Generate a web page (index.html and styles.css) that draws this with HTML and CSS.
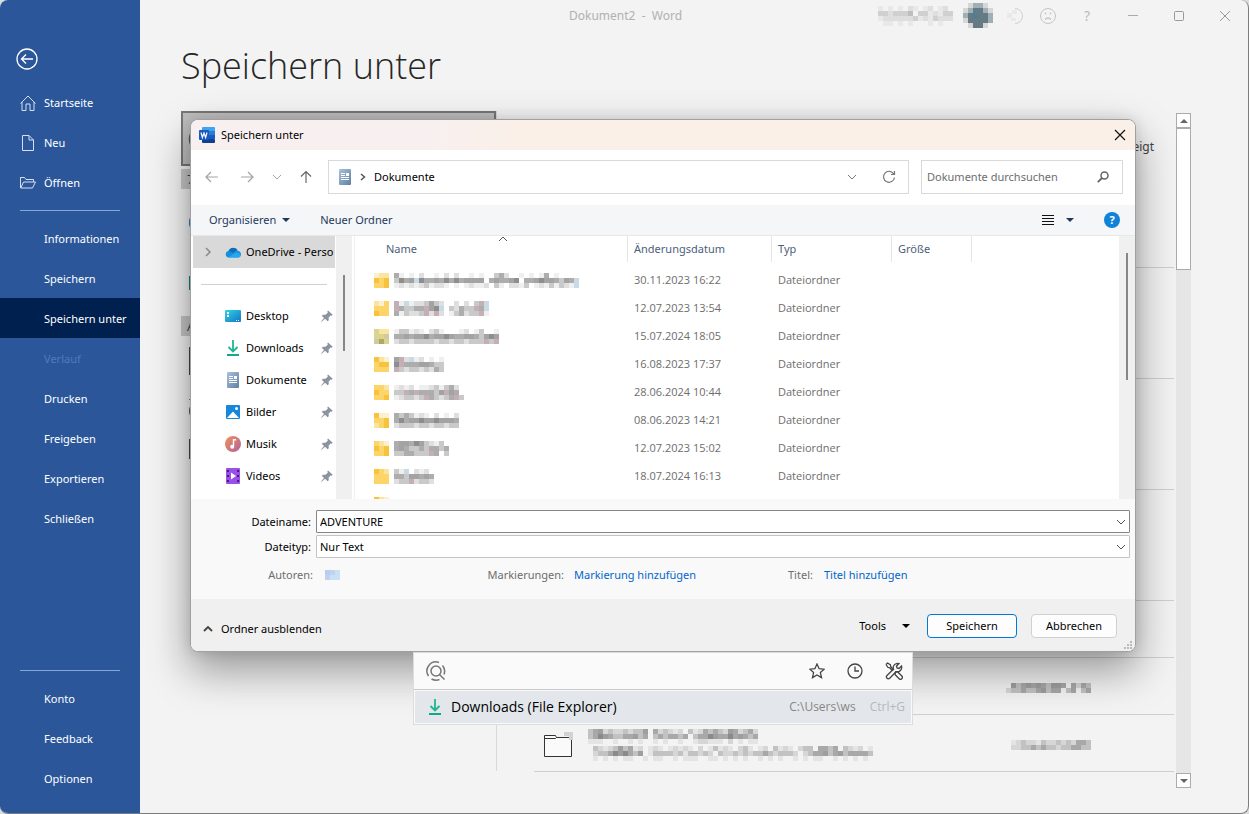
FILE: index.html
```html
<!DOCTYPE html>
<html lang="de">
<head>
<meta charset="utf-8">
<title>Dokument2 - Word</title>
<link rel="stylesheet" href="styles.css">
</head>
<body>
<svg class="defs" aria-hidden="true">
  <defs>
    <linearGradient id="g-dl" x1="0" y1="0" x2="0" y2="1"><stop offset="0" stop-color="#2cc59b"/><stop offset="1" stop-color="#0f9f86"/></linearGradient>
    <linearGradient id="g-doc" x1="0" y1="0" x2="1" y2="1"><stop offset="0" stop-color="#a9c2dc"/><stop offset="1" stop-color="#5f7fa3"/></linearGradient>
    <linearGradient id="g-desk" x1="0" y1="0" x2="1" y2="1"><stop offset="0" stop-color="#33d3e0"/><stop offset="1" stop-color="#1275c8"/></linearGradient>
    <linearGradient id="g-music" x1="0" y1="0" x2="1" y2="1"><stop offset="0" stop-color="#f2925a"/><stop offset="1" stop-color="#b0609c"/></linearGradient>
  </defs>
  <symbol id="i-doc" viewBox="0 0 14 16"><rect x="1" y="0" width="12" height="16" rx="1" fill="url(#g-doc)"/><path d="M3 4.500h4M3 6.500h4M3 8.500h8M3 10.500h8" stroke="#fff"/><rect x="8" y="4" width="3" height="3" fill="#fff"/></symbol>
  <symbol id="i-dl" viewBox="0 0 16 16"><path d="M8 0v11M3.500 7L8 11.500 12.500 7" fill="none" stroke="#1fb592" stroke-width="1.800"/><path d="M2 15h12" stroke="#14a88a" stroke-width="2"/></symbol>
  <symbol id="i-pin" viewBox="0 0 12 12"><path d="M7 .5l4.700 4.300-1 1-1.200-.2L7.600 7.800l.2 2.400-1.200 1L4 8.800.7 11.700l-.5-.5L3 8 .8 5.700 2 4.700l2.500.1L6.800 2.800l-.5-1.300z" fill="#8a949e"/></symbol>
  <symbol id="i-down" viewBox="0 0 10 6"><path d="M1 1l4 4 4-4" fill="none" stroke="currentColor"/></symbol>
  <symbol id="i-tri" viewBox="0 0 8 4"><path d="M0 0h8L4 4z" fill="currentColor"/></symbol>
</svg>
<div class="window">
  <nav class="side">
    <button class="back" aria-label="Zurück"><svg width="22" height="22" viewBox="0 0 22 22"><circle cx="11" cy="11" r="10" fill="none" stroke="#fff" stroke-width="1.300"/><path d="M17 11H6M10 6.500L5.500 11l4.500 4.500" fill="none" stroke="#fff" stroke-width="1.300"/></svg></button>
    <a class="item" href="#"><svg width="16" height="16" viewBox="0 0 16 16"><path d="M.5 8.500L8 1l7.500 7.500M2 7v8.500h4V9h4v6.500h4V7" fill="none" stroke="#d5e0f2"/></svg>Startseite</a>
    <a class="item" href="#"><svg width="16" height="16" viewBox="0 0 16 16"><path d="M2.500.5H9L13.500 5v10.500h-11zM9 .5V5h4.500" fill="none" stroke="#d5e0f2"/></svg>Neu</a>
    <a class="item" href="#"><svg width="16" height="16" viewBox="0 0 16 16"><path d="M.5 13V2.500h4L6 4.500h7.500V7M.8 13L3.500 7h12L12.500 13z" fill="none" stroke="#d5e0f2"/></svg>Öffnen</a>
    <hr>
    <a class="item" href="#">Informationen</a>
    <a class="item" href="#">Speichern</a>
    <a class="item current" href="#">Speichern unter</a>
    <a class="item off" aria-disabled="true" href="#">Verlauf</a>
    <a class="item" href="#">Drucken</a>
    <a class="item" href="#">Freigeben</a>
    <a class="item" href="#">Exportieren</a>
    <a class="item" href="#">Schließen</a>
    <div class="grow"></div>
    <hr>
    <a class="item" href="#">Konto</a>
    <a class="item" href="#">Feedback</a>
    <a class="item" href="#">Optionen</a>
  </nav>

  <main class="main">
    <header class="caption">
      <span class="caption-title">Dokument2&nbsp; -&nbsp; Word</span>
      <svg class="mosaic user" data-rows=".1.1.1.21.12.12.|.3323334.3312133|.122222231213222|..11.1.1...1.1.."></svg>
      <svg class="mosaic avatar" data-rows=".2tt2|2tTTt2|tTBTTt|2TTTTt|.2TT2"></svg>
      <button class="cap small" aria-label="Status"><svg width="18" height="18" viewBox="0 0 18 18"><path d="M8 1.500a7.500 7.500 0 0 1 0 15" fill="none" stroke="#cfcfcf"/><path d="M0 6h5v5H0zM5 3h5v4H5zM4 11h5v3H4z" fill="#e9e9e9"/></svg></button>
      <button class="cap small" aria-label="Feedback geben"><svg width="18" height="18" viewBox="0 0 18 18"><circle cx="9" cy="9" r="7.500" fill="none" stroke="#c4c4c4"/><path d="M6 12.500q3-3 6 0M6.500 5.500v2M11.500 5.500v2" fill="none" stroke="#c4c4c4" stroke-width="1.300"/></svg></button>
      <button class="cap quest">?</button>
      <button class="cap" aria-label="Minimieren"><svg width="12" height="12"><path d="M1 5.500h10" stroke="#aaa"/></svg></button>
      <button class="cap" aria-label="Maximieren"><svg width="12" height="12"><rect x="1.500" y="1.500" width="9" height="9" rx="1" fill="none" stroke="#999"/></svg></button>
      <button class="cap" aria-label="Schließen"><svg width="12" height="12"><path d="M1 1l10 10M11 1L1 11" stroke="#999"/></svg></button>
    </header>
    <h1>Speichern unter</h1>
    <div class="content">
      <section class="places">
        <button class="recent" aria-label="Zuletzt verwendet"><svg width="28" height="28" viewBox="0 0 28 28"><circle cx="14" cy="14" r="12.500" fill="none" stroke="#555" stroke-width="1.500"/></svg></button>
        <h2>7</h2>
        <div class="place"><svg width="30" height="16"><rect y="3" width="20" height="11" rx="4" fill="#1583d0"/></svg></div>
        <div class="place"><svg width="30" height="14"><rect width="30" height="14" fill="#0f7f86"/></svg></div>
        <h2 class="second">A</h2>
        <div class="place"><svg width="30" height="28"><rect x=".5" y=".5" width="28" height="27" fill="none" stroke="#444"/></svg></div>
        <div class="place"><svg width="30" height="24"><path d="M0 4.500h20" stroke="#3f9a50"/><rect x=".5" y="9" width="20" height="14" rx="6" fill="none" stroke="#555"/></svg></div>
        <div class="place"><svg width="30" height="20"><rect x=".5" y=".5" width="28" height="19" fill="none" stroke="#444"/></svg></div>
      </section>
      <section class="files">
        <p class="hint">zeigt</p>
        <ul>
          <li class="tall"></li><li class="tall"></li><li class="tall"></li><li class="tall"></li>
          <li></li>
          <li><svg class="mosaic date" data-rows=".53454543554.4243|23343345344.34.34"></svg></li>
          <li>
            <svg class="folder" width="30" height="26" viewBox="0 0 30 26"><path d="M1.500 24.500v-21h11l1 2h15v19zM1.500 6.500h11l1-1" fill="#fafafa" stroke="#333"/><path d="M21 0h9v8h-4V4h-5z" fill="#d2d2d2"/></svg>
            <div class="lines">
              <svg class="mosaic" data-rows="345232232335.423212.31243432542342|346543344534.3434434.3446544645434|111..1..1.1..1.1..1..122111.2.1.11"></svg>
              <svg class="mosaic" data-rows=".3212353412.121.12121.2.13121.231.12.3121.233.4434.3212.1|.2334656435.1333323133232.3223232334323332.23445345344443|.1.1.1.11..1.11..1.111..11.1.1.1..1.1.1..1.1.11..1.1.1.1."></svg>
            </div>
            <svg class="mosaic date" data-rows=".1232213223232443|.2233434332334433"></svg>
          </li>
        </ul>
      </section>
      <div class="scroll">
        <button aria-label="Nach oben"><svg width="8" height="4" class="up"><use href="#i-tri"/></svg></button>
        <div class="thumb"></div>
        <div class="grow"></div>
        <button aria-label="Nach unten"><svg width="8" height="4"><use href="#i-tri"/></svg></button>
      </div>
    </div>
  </main>

  <section class="dialog" role="dialog" aria-labelledby="dlg-title">
    <header class="dlg-head">
      <svg width="16" height="16" viewBox="0 0 16 16"><rect x="3" y="0" width="13" height="5" rx="1" fill="#41a5ee"/><rect x="3" y="4" width="13" height="4" fill="#2b7cd3"/><rect x="3" y="8" width="13" height="4" fill="#185abd"/><rect x="3" y="12" width="13" height="4" rx="1" fill="#103f91"/><rect x="0" y="3" width="10" height="10" rx="1" fill="#185abd"/><path d="M2 5.500l1.400 5L5 6l1.600 4.500L8 5.500" fill="none" stroke="#fff" stroke-width="1.200"/></svg>
      <span id="dlg-title">Speichern unter</span>
      <button class="plain close" aria-label="Schließen"><svg width="12" height="12"><path d="M1 1l10 10M11 1L1 11" stroke="#111" stroke-width="1.200"/></svg></button>
    </header>
    <div class="navbar">
      <button class="plain" aria-label="Zurück"><svg width="14" height="14"><path d="M13 7H1.500M6 2L1 7l5 5" fill="none" stroke="#a3a3a3" stroke-width="1.200"/></svg></button>
      <button class="plain" aria-label="Vorwärts"><svg width="14" height="14"><path d="M1 7h11.500M8 2l5 5-5 5" fill="none" stroke="#a3a3a3" stroke-width="1.200"/></svg></button>
      <button class="plain chev" aria-label="Verlauf"><svg width="10" height="6"><use href="#i-down"/></svg></button>
      <button class="plain" aria-label="Übergeordneter Ordner"><svg width="14" height="14"><path d="M7 13V1.500M2 6.500l5-5 5 5" fill="none" stroke="#666" stroke-width="1.200"/></svg></button>
      <div class="address">
        <svg width="14" height="16"><use href="#i-doc"/></svg>
        <svg width="6" height="8" viewBox="0 0 6 8"><path d="M1 1l3.500 3L1 7" fill="none" stroke="#555" stroke-width="1.500"/></svg>
        <span>Dokumente</span>
        <button class="plain grey" aria-label="Adressen anzeigen"><svg width="10" height="6"><use href="#i-down"/></svg></button>
        <button class="plain" aria-label="Aktualisieren"><svg width="14" height="14" viewBox="0 0 14 14"><path d="M11.800 4A5.500 5.500 0 1 0 12.500 7.500M12.500 1v3.500H9" fill="none" stroke="#777" stroke-width="1.200"/></svg></button>
      </div>
      <label class="search">
        <input type="text" placeholder="Dokumente durchsuchen" aria-label="Dokumente durchsuchen">
        <svg width="12" height="12" viewBox="0 0 12 12"><circle cx="7.500" cy="4.500" r="3.500" fill="none" stroke="#666" stroke-width="1.500"/><path d="M5 7L.8 11.200" stroke="#666" stroke-width="1.800"/></svg>
      </label>
    </div>
    <div class="toolbar">
      <button class="plain">Organisieren<svg width="8" height="4"><use href="#i-tri"/></svg></button>
      <button class="plain">Neuer Ordner</button>
      <div class="grow"></div>
      <button class="plain view" aria-label="Ansicht"><svg width="12" height="11"><path d="M0 .5h12M0 3.500h12M0 6.500h12M0 9.500h12" stroke="#111"/></svg><svg width="8" height="4"><use href="#i-tri"/></svg></button>
      <button class="help" aria-label="Hilfe">?</button>
    </div>
    <div class="browser">
      <div class="tree">
        <a href="#" class="node root"><svg width="6" height="10" viewBox="0 0 6 10"><path d="M1 1l4 4-4 4" fill="none" stroke="#888" stroke-width="1.500"/></svg><svg width="16" height="12" viewBox="0 0 16 12"><path d="M4 9.500A4 4 0 0 1 4 4a5 5 0 0 1 8.500 0L8 9z" fill="#0f6cbd"/><path d="M3.500 11.500a3.300 3.300 0 0 1 0-6.500c2 0 3 1 4.500 2l3-2.500c3 0 5 1.500 5 3.800 0 2-1.500 3.200-3 3.200z" fill="#1490df"/><path d="M3 11.500l8-5c2 .3 5 1.500 4.500 3.500-.5 1-1.500 1.500-2.500 1.500z" fill="#28a8ea"/></svg><span>OneDrive - Perso</span></a>
        <hr>
        <a href="#" class="node"><svg width="16" height="16" viewBox="0 0 16 16"><rect y="2" width="16" height="12" rx="1" fill="url(#g-desk)"/><path d="M2 4h2v2H2zM2 7h2v2H2z" fill="#fff"/><path d="M11 12.500h4" stroke="#fff" stroke-dasharray="1 1"/></svg><span>Desktop</span><svg width="12" height="12"><use href="#i-pin"/></svg></a>
        <a href="#" class="node"><svg width="16" height="16"><use href="#i-dl"/></svg><span>Downloads</span><svg width="12" height="12"><use href="#i-pin"/></svg></a>
        <a href="#" class="node"><svg width="16" height="16"><use href="#i-doc"/></svg><span>Dokumente</span><svg width="12" height="12"><use href="#i-pin"/></svg></a>
        <a href="#" class="node"><svg width="16" height="16" viewBox="0 0 16 16"><rect x="1" y="1" width="14" height="14" rx="1" fill="#1787db"/><path d="M2 14l6-6.500 6 6.500z" fill="#fff"/><circle cx="11.500" cy="4.500" r="1.500" fill="#fff"/></svg><span>Bilder</span><svg width="12" height="12"><use href="#i-pin"/></svg></a>
        <a href="#" class="node"><svg width="16" height="16" viewBox="0 0 16 16"><circle cx="8" cy="8" r="8" fill="url(#g-music)"/><path d="M8.500 10.500V3.800h2.700" fill="none" stroke="#fff" stroke-width="1.400"/><circle cx="7.200" cy="10.800" r="2" fill="#fff"/></svg><span>Musik</span><svg width="12" height="12"><use href="#i-pin"/></svg></a>
        <a href="#" class="node"><svg width="16" height="16" viewBox="0 0 16 16"><rect x="1" width="14" height="16" rx="1" fill="#9a4fe8"/><path d="M6 4.500v7L11 8z" fill="#fff"/><path d="M3 2v12M13 2v12" stroke="#4a1a80" stroke-width="2" stroke-dasharray="2 3"/></svg><span>Videos</span><svg width="12" height="12"><use href="#i-pin"/></svg></a>
      </div>
      <div class="track left"><div></div></div>
      <div class="list">
        <svg class="sort" width="10" height="6"><use href="#i-down"/></svg>
        <table>
          <thead><tr><th class="c-name"><div>Name</div></th><th class="c-date"><div>Änderungsdatum</div></th><th class="c-type"><div>Typ</div></th><th class="c-size"><div>Größe</div></th><th class="c-rest"></th></tr></thead>
          <tbody>
            <tr><td><span class="cell"><svg class="mosaic" data-rows="loo|YyY|yyY"></svg><svg class="mosaic" data-rows="41.1.2..1.2.2..1.1..342..1.1.14.1....|3645b6445464645555.454456.4456554354b|12121231221.1.12112.31.2213.12131321b"></svg></span></td><td>30.11.2023 16:22</td><td>Dateiordner</td><td></td></tr>
            <tr><td><span class="cell"><svg class="mosaic" data-rows="oly|yyy|Yyy"></svg><svg class="mosaic" data-rows="p1b1223532..2.2.3pb|p43344p56b.32433p4b|413223p2p2.134233p1"></svg></span></td><td>12.07.2023 13:54</td><td>Dateiordner</td><td></td></tr>
            <tr><td><span class="cell"><svg class="mosaic" data-rows="goo|ggO|OGg"></svg><svg class="mosaic" data-rows="133121.231...12.13..1|445455645565445543565|233233332332332333p3p"></svg></span></td><td>15.07.2024 18:05</td><td>Dateiordner</td><td></td></tr>
            <tr><td><span class="cell"><svg class="mosaic" data-rows="Yol|yYY|yyy"></svg><svg class="mosaic" data-rows="5p2b12.1.1|6p44455433|p323323243"></svg></span></td><td>16.08.2023 17:37</td><td>Dateiordner</td><td></td></tr>
            <tr><td><span class="cell"><svg class="mosaic" data-rows="yyo|Yyy|yyY"></svg><svg class="mosaic" data-rows="1212.11231342|33p4p44435p54|123323p43234p3"></svg></span></td><td>28.06.2024 10:44</td><td>Dateiordner</td><td></td></tr>
            <tr><td><span class="cell"><svg class="mosaic" data-rows="Yll|yyY|oyY"></svg><svg class="mosaic" data-rows="4343121.2.1.2|4645565565554|2333233233233"></svg></span></td><td>08.06.2023 14:21</td><td>Dateiordner</td><td></td></tr>
            <tr><td><span class="cell"><svg class="mosaic" data-rows="yol|YyY|yyY"></svg><svg class="mosaic" data-rows="4554653213|45433434434|3344333p4.3"></svg></span></td><td>12.07.2023 15:02</td><td>Dateiordner</td><td></td></tr>
            <tr><td><span class="cell"><svg class="mosaic" data-rows="Yyo|yyy|yyy"></svg><svg class="mosaic" data-rows="31b.212.|44355454|233p2332"></svg></span></td><td>18.07.2024 16:13</td><td>Dateiordner</td><td></td></tr>
            <tr><td><span class="cell"><svg class="mosaic" data-rows="Yol|YYY|yyy"></svg></span></td><td></td><td></td><td></td></tr>
          </tbody>
        </table>
      </div>
      <div class="track right"><div></div></div>
    </div>
    <form class="form">
      <label for="fname">Dateiname:</label>
      <div class="field strong"><input id="fname" type="text" value="ADVENTURE"><svg width="10" height="6"><use href="#i-down"/></svg></div>
      <label for="ftype">Dateityp:</label>
      <div class="field"><select id="ftype"><option>Nur Text</option></select><svg width="10" height="6"><use href="#i-down"/></svg></div>
      <div class="meta">
        <span class="m1">Autoren:</span><span class="m2"><svg class="mosaic" data-rows="uvw|vww"></svg></span>
        <span class="m3">Markierungen:</span><a class="m4" href="#">Markierung hinzufügen</a>
        <span class="m5">Titel:</span><a href="#">Titel hinzufügen</a>
      </div>
    </form>
    <footer class="foot">
      <button class="plain hide"><svg width="10" height="6" class="up"><path d="M1 1l4 4 4-4" fill="none" stroke="#444" stroke-width="1.800"/></svg>Ordner ausblenden</button>
      <div class="grow"></div>
      <button class="plain tools">Tools<svg width="8" height="4"><use href="#i-tri"/></svg></button>
      <button class="btn primary">Speichern</button>
      <button class="btn">Abbrechen</button>
      <svg class="grip" width="8" height="8"><path d="M6 0h2v2H6zM3 3h2v2H3zM6 3h2v2H6zM0 6h2v2H0zM3 6h2v2H3zM6 6h2v2H6z" fill="#bbb"/></svg>
    </footer>
  </section>

  <section class="popup">
    <div class="pop-bar">
      <svg width="20" height="20" viewBox="0 0 20 20"><g fill="none" stroke="#777" stroke-width="1.500"><circle cx="10" cy="10" r="5"/><path d="M13.500 13.500l5 5M2.500 15A9 9 0 0 1 13 1.500M5.500 18q4 2 8 .5M16.500 4.500a9 9 0 0 1 1.500 9"/></g></svg>
      <div class="grow"></div>
      <button class="plain" aria-label="Favoriten"><svg width="16" height="16" viewBox="0 0 16 16"><path d="M8 1l2.100 4.700 5.100.5-3.800 3.400 1.100 5L8 12l-4.500 2.600 1.100-5L.8 6.200l5.100-.5z" fill="none" stroke="#444" stroke-width="1.300"/></svg></button>
      <button class="plain" aria-label="Zuletzt verwendet"><svg width="16" height="16" viewBox="0 0 16 16"><circle cx="8" cy="8" r="7" fill="none" stroke="#444" stroke-width="1.300"/><path d="M8 3.500V8h4" fill="none" stroke="#444" stroke-width="1.300"/></svg></button>
      <button class="plain" aria-label="Einstellungen"><svg width="18" height="18" viewBox="0 0 18 18"><g fill="none" stroke="#444" stroke-width="1.300"><path d="M1 2.500L2.500 1l2.800 1.700.5 2L9 8M1 2.500l1.800 2.800 2 .5L7.500 8.800M10.500 10l2-.3 4.300 4.300a1.800 1.800 0 0 1-2.700 2.700L10 12.500z"/><path d="M2 13.500l6.300-6.200C7.500 3.500 10.500.5 14 1.500L11.500 4l.5 2 2 .5L16.500 4c1 3.500-2 6.500-5.500 5.700L4.700 16.200A1.900 1.900 0 0 1 2 13.500z"/></g></svg></button>
    </div>
    <a class="pop-row" href="#">
      <svg width="16" height="16"><use href="#i-dl"/></svg>
      <span class="pop-name">Downloads (File Explorer)</span>
      <span class="pop-path">C:\Users\ws</span>
      <span class="pop-key">Ctrl+G</span>
    </a>
  </section>
</div>
<script src="mosaic.js"></script>
</body>
</html>
```
FILE: styles.css
```css
* { box-sizing: border-box; }
html, body { height: 100%; }
body { margin: 0; background: #dcdcdc; font: 11px/16px "Noto Sans", "Open Sans", sans-serif; color: #000; }
button, input, select { font: inherit; color: inherit; margin: 0; }
button { border: 0; background: none; padding: 0; }
a { color: inherit; text-decoration: none; }
svg { display: block; flex: none; }
.defs { position: absolute; width: 0; height: 0; }
.grow { flex: 1; }
.up { transform: rotate(180deg); }
.plain { display: flex; align-items: center; }

.window { position: relative; display: flex; min-height: 100%; background: #f3f3f3; border: solid #7d7d7d; border-width: 0 1px 1px 0; border-radius: 8px; overflow: hidden; }

.side { width: 140px; flex: none; display: flex; flex-direction: column; background: #2b579a; color: #fff; padding: 48px 0 15px; }
.back { width: 22px; height: 22px; margin: 0 0 12px 16px; }
.item { display: flex; align-items: center; gap: 8px; height: 40px; padding: 1px 0 0 44px; white-space: nowrap; }
.item:has(svg) { padding-left: 20px; }
.item.current { background: #002050; }
.item.off { color: #4f7bbb; }
.side hr { width: 100px; height: 1px; border: 0; margin: 8px 20px 7px; background: #83a7d6; flex: none; }

.main { flex: 1; min-width: 0; display: flex; flex-direction: column; padding-bottom: 25px; }
.caption { display: flex; align-items: center; height: 31px; color: #b1b1b1; }
.caption-title { flex: 1; padding-left: 429px; font-size: 12px; }
.user { margin-right: 10px; opacity: .7; }
.avatar { margin-right: 7px; }
.cap { width: 46px; height: 31px; display: flex; align-items: center; justify-content: center; }
.cap.small { width: 32px; }
.quest { color: #bbb; font-size: 14px; }
h1 { margin: 8px 0 18px 41px; font-family: "Open Sans", sans-serif; font-size: 36px; line-height: 54px; font-weight: 300; color: #262626; }
.content { flex: 1; display: flex; padding: 0 57px 0 41px; }
.places { width: 316px; border-right: 1px solid #d9d9d9; margin-bottom: 17px; }
.recent { display: flex; align-items: center; width: 100%; height: 55px; padding-left: 5px; border: 2px solid #777; background: #bfbfbf; }
.places h2 { margin: 3px 0 25px; height: 20px; padding-left: 6px; background: #c8c8c8; color: #444; font-size: 13px; line-height: 20px; font-weight: 400; }
.place { padding-left: 8px; margin-bottom: 46px; }
.place + .second { margin: -20px 0 11px; }
.second ~ .place { margin-bottom: 20px; }
.files { flex: 1; margin-left: 37px; }
.hint { margin: 0; padding: 28px 22px 2px 0; height: 46px; text-align: right; font-size: 12px; color: #444; }
.files ul { list-style: none; margin: 0 2px 0 0; padding: 0; }
.files li { display: flex; align-items: center; height: 57px; border-bottom: 1px solid #cfcfcf; padding: 4px 0 0 9px; }
.files li.tall { height: 111px; }
.folder { margin-right: 15px; }
.lines { display: flex; flex-direction: column; gap: 2px; }
.date { margin: 0 83px 0 auto; }
.scroll { width: 15px; margin-top: 2px; display: flex; flex-direction: column; background: #e6e6e6; color: #666; }
.scroll button { width: 15px; height: 15px; display: flex; align-items: center; justify-content: center; background: #fff; border: 1px solid #ababab; }
.scroll .thumb { height: 142px; background: #fff; border: 1px solid #ababab; }

.dialog { position: absolute; top: 119px; left: 190px; right: 112px; background: #fff; border: 1px solid #a0a0a0; border-radius: 8px; overflow: hidden; box-shadow: 0 18px 40px 2px rgba(0,0,0,.36), 0 0 14px rgba(0,0,0,.12); }
.dlg-head { display: flex; align-items: center; height: 30px; padding: 0 9px 0 8px; gap: 6px; background: linear-gradient(90deg, #f8f0f0 0, #f8f0f0 25%, #faf0e8 35%); }
.close { margin-left: auto; }
.navbar { display: flex; align-items: center; height: 55px; padding: 0 12px 2px 14px; }
.navbar > .plain { margin-right: 21px; }
.navbar > .chev { margin: 0 17px 0 -3px; color: #a3a3a3; }
.navbar > .chev + .plain { margin-right: 15px; }
.address { flex: 1; display: flex; align-items: center; height: 34px; padding: 0 12px 0 9px; border: 1px solid #d9d9d9; gap: 8px; }
.address .plain { color: #777; }
.address .plain.grey { margin: 0 17px 0 auto; }
.search { display: flex; align-items: center; width: 202px; height: 34px; margin-left: 12px; padding: 0 13px 0 5px; border: 1px solid #d9d9d9; }
.search input { flex: 1; min-width: 0; border: 0; padding: 0; outline: 0; background: none; }
.search input::placeholder { color: #6d6d6d; opacity: 1; }
.toolbar { display: flex; align-items: center; height: 31px; padding: 0 15px 0 18px; gap: 30px; background: #f5f6f8; border-bottom: 1px solid #e8e8e8; color: #1e395b; }
.toolbar .plain { gap: 6px; }
.toolbar .view { gap: 12px; }
.help { width: 16px; height: 16px; border-radius: 50%; background: #1082d8; color: #fff; font-weight: 700; line-height: 16px; }

.browser { display: flex; height: 263px; overflow: hidden; }
.tree { width: 145px; flex: none; }
.node { display: flex; align-items: center; height: 32px; padding: 0 3px 0 34px; gap: 5px; white-space: nowrap; }
.node span { flex: 1; }
.root { margin: 0 1px 0 2px; padding: 0 0 0 12px; background: #d9d9d9; }
.root svg:first-child { margin-right: 9px; }
.tree hr { height: 1px; border: 0; margin: 16px 9px 15px 10px; background: #d0d0d0; }
.track { width: 16px; flex: none; background: #f0f0f0; }
.track div { width: 2px; background: #868686; }
.track.left div { height: 76px; margin: 39px 0 0 7px; }
.track.right div { height: 127px; margin: 17px 0 0 7px; }
.list { position: relative; flex: 1; margin-left: 2px; border-left: 1px solid #f0f0f0; }
.sort { position: absolute; left: 143px; top: 0; color: #555; transform: rotate(180deg); }
table { width: 100%; table-layout: fixed; border-collapse: collapse; }
th, td { padding: 0; text-align: left; font-weight: 400; }
th { height: 30px; vertical-align: top; color: #4c607a; }
th div { height: 26px; line-height: 26px; padding-left: 6px; border-right: 1px solid #e5e5e5; }
.c-name { width: 273px; }
.c-name div { padding-left: 31px; }
.c-date { width: 144px; }
.c-type { width: 120px; }
.c-size { width: 80px; }
td { height: 28px; color: #6d6d6d; padding-left: 6px; font-family: "Open Sans", sans-serif; }
td:first-child { padding-left: 19px; }
.cell { display: flex; gap: 5px; }

.form { display: grid; grid-template-columns: 120px 1fr; column-gap: 5px; row-gap: 2px; align-items: center; height: 100px; padding: 11px 5px 12px 0; background: #f9f9f9; }
.form label { text-align: right; }
.field { display: flex; align-items: center; height: 23px; background: #fff; border: 1px solid #c4c4c4; border-radius: 1px; padding-right: 3px; color: #555; }
.field.strong { border-color: #868686; }
.field input, .field select { flex: 1; height: 21px; min-width: 0; border: 0; outline: 0; padding: 0 3px; background: none; appearance: none; color: #000; }
.meta { grid-column: 1 / 3; display: flex; align-items: center; height: 28px; padding-top: 2px; color: #6d6d6d; }
.meta a { color: #0066cc; }
.m1 { width: 122px; text-align: right; }
.m2 { width: 173px; padding-left: 12px; }
.m3 { width: 78px; text-align: right; white-space: nowrap; }
.m4 { width: 214px; margin-left: 10px; }
.m5 { margin: 0 11px 0 0; }
.foot { position: relative; display: flex; align-items: center; height: 52px; padding: 2px 18px 0 12px; background: #f0f0f0; }
.hide { gap: 8px; padding-top: 6px; }
.tools { gap: 16px; margin-right: 17px; }
.btn { width: 86px; height: 24px; border: 1px solid #d0d0d0; border-radius: 4px; background: #fdfdfd; }
.btn.primary { width: 90px; border-color: #0078d4; margin-right: 14px; }
.grip { position: absolute; right: 3px; bottom: 2px; }

.popup { position: absolute; left: 413px; top: 652px; width: 500px; border: 1px solid #dcdcdc; background: #fafafa; }
.pop-bar { display: flex; align-items: center; gap: 22px; height: 37px; padding: 0 9px 0 12px; border-bottom: 1px solid #c8c8c8; }
.pop-row { display: flex; align-items: center; height: 32px; margin: 1px; padding: 0 6px 0 12px; background: #e3e7ec; font-family: "Open Sans", sans-serif; }
.pop-name { flex: 1; margin-left: 8px; font-size: 14px; line-height: 20px; }
.pop-path { font-size: 12px; color: #868686; margin-right: 14px; }
.pop-key { font-size: 12px; color: #b4b8bc; }
```
FILE: mosaic.js
```js
// Redacted names are drawn as rows of five-pixel tiles, one character per tile.
const tones = {
  1: "#8882", 2: "#8884", 3: "#7776", 4: "#7779", 5: "#6669", 6: "#555a",
  p: "#c4b0b4", b: "#c8dae6",
  l: "#fdf0cf", o: "#fbe4a0", y: "#fdd468", Y: "#f8c33c",
  g: "#d9d58e", G: "#b0a860", O: "#cfc9a4",
  t: "#9db0b6", T: "#647b84", B: "#557a94",
  u: "#b4cff0", v: "#c2d2ee", w: "#c9e0f5"
};
const tile = 5;
document.querySelectorAll(".mosaic").forEach((svg) => {
  const rows = svg.dataset.rows.split("|");
  svg.setAttribute("width", Math.max(...rows.map((r) => r.length)) * tile);
  svg.setAttribute("height", rows.length * tile);
  svg.setAttribute("shape-rendering", "crispEdges");
  svg.setAttribute("aria-hidden", "true");
  rows.forEach((row, y) => [...row].forEach((key, x) => {
    if (!tones[key]) return;
    const rect = document.createElementNS("http://www.w3.org/2000/svg", "rect");
    rect.setAttribute("x", x * tile);
    rect.setAttribute("y", y * tile);
    rect.setAttribute("width", tile);
    rect.setAttribute("height", tile);
    rect.setAttribute("fill", tones[key]);
    svg.append(rect);
  }));
});
```
